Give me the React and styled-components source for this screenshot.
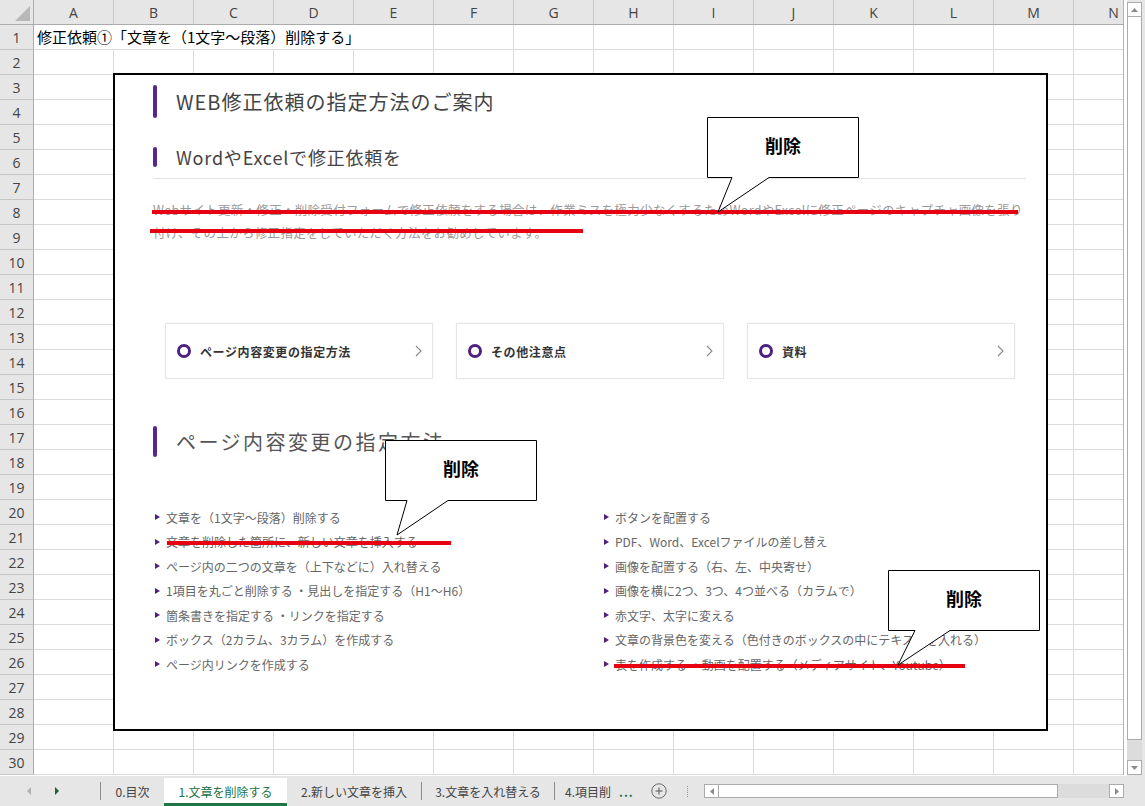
import React from "react";
import styled, { createGlobalStyle } from "styled-components";

const JP = `"Noto Sans CJK JP", "Noto Sans", sans-serif`;

const GlobalStyle = createGlobalStyle`
  html, body { margin: 0; padding: 0; }
  body { font-family: ${JP}; background: #e6e6e6; overflow: hidden; }
  *, *::before, *::after { box-sizing: border-box; }
`;

const Window = styled.div`
  width: 1145px;
  height: 806px;
  display: flex;
  flex-direction: column;
  background: #e6e6e6;
  overflow: hidden;
`;

const Workspace = styled.div`
  display: flex;
  height: 776px;
  flex: none;
`;

const Sheet = styled.div`
  position: relative;
  width: 1127px;
  height: 776px;
  flex: none;
  background: #fff;
  padding-right: 3px;
  overflow: hidden;
`;

const GridClip = styled.div`
  width: 1124px;
  height: 775px;
  overflow: hidden;
  border-right: 1px solid #b4b4b4;
`;

const Grid = styled.div`
  display: grid;
  grid-template-columns: 34px repeat(14, 80px);
  grid-auto-rows: 25px;
  width: 1154px;
`;

const Corner = styled.div`
  position: relative;
  background: #e6e6e6;
  border-right: 1px solid #ababab;
  border-bottom: 1px solid #ababab;
  &::after {
    content: "";
    position: absolute;
    right: 3px;
    bottom: 3px;
    width: 0;
    height: 0;
    border-left: 15px solid transparent;
    border-bottom: 15px solid #b8b8b8;
  }
`;

const ColHead = styled.div`
  background: #e6e6e6;
  border-right: 1px solid #c6c6c6;
  border-bottom: 1px solid #ababab;
  display: flex;
  align-items: center;
  justify-content: center;
  font-family: "Open Sans", "Noto Sans", sans-serif;
  font-size: 14px;
  color: #444;
`;

const RowHead = styled.div`
  background: #e6e6e6;
  border-right: 1px solid #ababab;
  border-bottom: 1px solid #c6c6c6;
  display: flex;
  align-items: center;
  justify-content: center;
  font-family: "Open Sans", "Noto Sans", sans-serif;
  font-size: 14px;
  color: #444;
`;

const Cell = styled.div`
  border-right: 1px solid ${(p) => (p.$flow ? "transparent" : "#dadada")};
  border-bottom: 1px solid #dadada;
  padding-left: 3px;
  font-family: ${JP};
  font-size: 15px;
  line-height: 24px;
  color: #000;
  white-space: nowrap;
`;

/* ---------- embedded picture of the web page ---------- */

const Page = styled.div`
  position: absolute;
  left: 113px;
  top: 73px;
  width: 935px;
  height: 658px;
  border: 2px solid #000;
  background: #fff;
  padding: 10px 20px 0 38px;
  overflow: hidden;
  font-family: ${JP};
`;

const Heading = styled.div`
  display: flex;
  align-items: center;
  gap: 19px;
  height: ${(p) => p.$h}px;
  margin-top: ${(p) => p.$mt || 0}px;
  font-size: ${(p) => p.$fs}px;
  letter-spacing: ${(p) => p.$ls}px;
  color: ${(p) => p.$color || "#444"};
  line-height: 1;
  white-space: nowrap;
`;

const Bar = styled.span`
  width: 4px;
  height: 100%;
  border-radius: 2px;
  background: #55298a;
  flex: none;
`;

const Rule = styled.div`
  height: 1px;
  background: #e3e3e3;
  margin-top: 11px;
`;

const Lead = styled.p`
  margin: 20px 0 0;
  font-size: 12.5px;
  line-height: 22.5px;
  letter-spacing: 0.3px;
  color: #9a9a9a;
  white-space: nowrap;
`;

const CardRow = styled.div`
  display: grid;
  grid-template-columns: repeat(3, 268px);
  gap: 23px;
  margin-top: 79px;
  padding-left: 12px;
`;

const Card = styled.div`
  height: 56px;
  border: 1px solid #e6e6e6;
  box-shadow: 0 0 2px rgba(0, 0, 0, 0.06);
  display: flex;
  align-items: center;
  gap: 9px;
  padding: 0 10px 0 11px;
`;

const Ring = styled.span`
  width: 14px;
  height: 14px;
  border-radius: 50%;
  border: 3px solid #4e2180;
  flex: none;
`;

const CardLabel = styled.span`
  flex: 1;
  font-size: 12px;
  font-weight: 700;
  color: #333;
  letter-spacing: 0.6px;
  white-space: nowrap;
`;

const List = styled.ul`
  list-style: none;
  margin: 48px 0 0;
  padding: 0 0 0 2px;
  display: grid;
  grid-template-columns: 449px 1fr;
  grid-template-rows: repeat(7, 24.5px);
  grid-auto-flow: column;
`;

const Item = styled.li`
  display: flex;
  align-items: center;
  gap: 6px;
  font-size: 12px;
  color: #666;
  white-space: nowrap;
`;

const Tri = styled.span`
  width: 0;
  height: 0;
  border-left: 5px solid #4e2180;
  border-top: 3px solid transparent;
  border-bottom: 3px solid transparent;
  flex: none;
`;

/* ---------- annotations over the picture ---------- */

const Strike = styled.div`
  position: absolute;
  height: 4px;
  background: #e60012;
`;

const CalloutWrap = styled.div`
  position: absolute;
  width: 153px;
  height: 98px;
`;

const CalloutShape = styled.svg`
  position: absolute;
  left: 0;
  top: 0;
  overflow: visible;
`;

const CalloutLabel = styled.div`
  position: relative;
  width: 152px;
  height: 60px;
  display: flex;
  justify-content: center;
  padding-top: 15px;
  font-family: ${JP};
  font-size: 18px;
  font-weight: 700;
  color: #000;
  line-height: 26px;
`;

function Callout({ left, top, b1, b2, tip }) {
  const pts = [
    [0.5, 0.5],
    [151.5, 0.5],
    [151.5, 60.5],
    [b2, 60.5],
    tip,
    [b1, 60.5],
    [0.5, 60.5],
  ]
    .map((p) => p.join(","))
    .join(" ");
  return (
    <CalloutWrap style={{ left, top }}>
      <CalloutShape width="153" height="98">
        <polygon points={pts} fill="#fff" stroke="#000" strokeWidth="1" />
      </CalloutShape>
      <CalloutLabel>削除</CalloutLabel>
    </CalloutWrap>
  );
}

/* ---------- scrollbars & tabs ---------- */

const VScroll = styled.div`
  width: 18px;
  flex: none;
  display: flex;
  flex-direction: column;
  padding: 2px 3px 1px 0;
  background: #e6e6e6;
`;

const SBtn = styled.div`
  flex: none;
  width: ${(p) => (p.$h ? "15px" : "100%")};
  height: ${(p) => (p.$h ? "100%" : "15px")};
  background: #fff;
  border: 1px solid #ababab;
  display: flex;
  align-items: center;
  justify-content: center;
`;

const VThumb = styled.div`
  flex: none;
  height: 723px;
  background: #fff;
  border: 1px solid #ababab;
  border-top: none;
`;

const Track = styled.div`
  flex: 1;
  background: #dcdcdc;
`;

const TabBar = styled.div`
  flex: none;
  height: 30px;
  display: flex;
  align-items: center;
  background: #e6e6e6;
  font-family: ${JP};
  font-size: 12px;
  color: #444;
`;

const NavArrows = styled.div`
  width: 100px;
  height: 100%;
  display: flex;
  align-items: center;
  padding-left: 27px;
  gap: 24px;
  flex: none;
`;

const ArrowL = styled.span`
  width: 0;
  height: 0;
  border-top: 4px solid transparent;
  border-bottom: 4px solid transparent;
  border-right: 4px solid ${(p) => p.$c};
`;

const ArrowR = styled.span`
  width: 0;
  height: 0;
  border-top: 4px solid transparent;
  border-bottom: 4px solid transparent;
  border-left: 4px solid ${(p) => p.$c};
`;

const Sep = styled.span`
  width: 1px;
  height: 18px;
  background: #8c8c8c;
  flex: none;
`;

const Tab = styled.div`
  width: ${(p) => p.$w}px;
  flex: none;
  height: ${(p) => (p.$active ? "28px" : "100%")};
  align-self: flex-end;
  display: flex;
  align-items: center;
  justify-content: ${(p) => (p.$start ? "flex-start" : "center")};
  padding: ${(p) => (p.$start ? "0 0 0 10px" : "0")};
  padding-top: ${(p) => (p.$active ? "1px" : "0")};
  background: ${(p) => (p.$active ? "#fff" : "transparent")};
  color: ${(p) => (p.$active ? "#217346" : "#444")};
  border-bottom: ${(p) => (p.$active ? "3px solid #217346" : "none")};
  white-space: nowrap;
`;

const More = styled.span`
  margin-left: 8px;
  color: #217346;
  font-weight: 700;
  letter-spacing: 1px;
`;

const PlusBtn = styled.svg`
  flex: none;
  margin-left: 2px;
`;

const DotSep = styled.span`
  flex: none;
  margin-left: 20px;
  width: 1px;
  height: 11px;
  border-left: 1px dotted #9a9a9a;
`;

const HScroll = styled.div`
  flex: none;
  margin-left: 16px;
  width: 420px;
  height: 14px;
  display: flex;
  background: #dcdcdc;
`;

const HThumb = styled.div`
  flex: none;
  width: 339px;
  background: #fff;
  border: 1px solid #ababab;
  border-left: none;
`;

const Arrow = ({ dir }) => {
  const shapes = {
    up: "0,4 3.5,0 7,4",
    down: "0,0 3.5,4 7,0",
    left: "4,0 0,3.5 4,7",
    right: "0,0 4,3.5 0,7",
  };
  const vertical = dir === "up" || dir === "down";
  return (
    <svg width={vertical ? 7 : 4} height={vertical ? 4 : 7}>
      <polygon points={shapes[dir]} fill="#8a8a8a" />
    </svg>
  );
};

const Chevron = () => (
  <svg width="7" height="12" viewBox="0 0 7 12">
    <polyline points="1,1 6,6 1,11" fill="none" stroke="#8a8a8a" strokeWidth="1.1" />
  </svg>
);

const COLS = "ABCDEFGHIJKLMN".split("");
const ROWS = Array.from({ length: 30 }, (_, i) => i + 1);

const leftItems = [
  "文章を（1文字～段落）削除する",
  "文章を削除した箇所に、新しい文章を挿入する",
  "ページ内の二つの文章を（上下などに）入れ替える",
  "1項目を丸ごと削除する ・見出しを指定する（H1～H6）",
  "箇条書きを指定する ・リンクを指定する",
  "ボックス（2カラム、3カラム）を作成する",
  "ページ内リンクを作成する",
];

const rightItems = [
  "ボタンを配置する",
  "PDF、Word、Excelファイルの差し替え",
  "画像を配置する（右、左、中央寄せ）",
  "画像を横に2つ、3つ、4つ並べる（カラムで）",
  "赤文字、太字に変える",
  "文章の背景色を変える（色付きのボックスの中にテキストを入れる）",
  "表を作成する ・動画を配置する（メディアサイト、Youtube）",
];

const cards = ["ページ内容変更の指定方法", "その他注意点", "資料"];

export default function App() {
  return (
    <Window>
      <GlobalStyle />
      <Workspace>
        <Sheet>
          <GridClip>
            <Grid>
              <Corner />
              {COLS.map((c) => (
                <ColHead key={c}>{c}</ColHead>
              ))}
              {ROWS.map((r) => (
                <React.Fragment key={r}>
                  <RowHead>{r}</RowHead>
                  {COLS.map((c, ci) => (
                    <Cell key={c} $flow={r === 1 && ci < 4}>
                      {r === 1 && ci === 0 ? "修正依頼①「文章を（1文字～段落）削除する」" : null}
                    </Cell>
                  ))}
                </React.Fragment>
              ))}
            </Grid>
          </GridClip>

          <Page>
            <Heading $h={33} $fs={20} $ls={1}>
              <Bar />
              WEB修正依頼の指定方法のご案内
            </Heading>
            <Heading $h={20} $mt={29} $fs={18} $ls={0.8}>
              <Bar />
              WordやExcelで修正依頼を
            </Heading>
            <Rule />
            <Lead>
              Webサイト更新・修正・削除受付フォームで修正依頼をする場合は、作業ミスを極力少なくするためWordやExcelに修正ページのキャプチャ画像を張り
              <br />
              付け、その上から修正指定をしていただく方法をお勧めしています。
            </Lead>
            <CardRow>
              {cards.map((t) => (
                <Card key={t}>
                  <Ring />
                  <CardLabel>{t}</CardLabel>
                  <Chevron />
                </Card>
              ))}
            </CardRow>
            <Heading $h={31} $mt={47} $fs={20} $ls={2.5} $color="#555">
              <Bar />
              ページ内容変更の指定方法
            </Heading>
            <List>
              {leftItems.concat(rightItems).map((t) => (
                <Item key={t}>
                  <Tri />
                  {t}
                </Item>
              ))}
            </List>
          </Page>

          <Strike style={{ left: 152, top: 210, width: 866 }} />
          <Strike style={{ left: 150, top: 229, width: 433 }} />
          <Strike style={{ left: 167, top: 541, width: 284 }} />
          <Strike style={{ left: 614, top: 664, width: 351 }} />

          <Callout left={707} top={117} b1={25} b2={62} tip={[11, 95]} />
          <Callout left={385} top={440} b1={22} b2={63} tip={[12, 95]} />
          <Callout left={888} top={570} b1={27} b2={62} tip={[10, 95]} />
        </Sheet>

        <VScroll>
          <SBtn>
            <Arrow dir="up" />
          </SBtn>
          <VThumb />
          <Track />
          <SBtn>
            <Arrow dir="down" />
          </SBtn>
        </VScroll>
      </Workspace>

      <TabBar>
        <NavArrows>
          <ArrowL $c="#b0b0b0" />
          <ArrowR $c="#1e5e38" />
        </NavArrows>
        <Sep />
        <Tab $w={63}>0.目次</Tab>
        <Tab $w={123} $active>
          1.文章を削除する
        </Tab>
        <Tab $w={134}>2.新しい文章を挿入</Tab>
        <Sep />
        <Tab $w={132}>3.文章を入れ替える</Tab>
        <Sep />
        <Tab $w={94} $start>
          4.項目削<More>...</More>
        </Tab>
        <PlusBtn width="16" height="16" viewBox="0 0 16 16">
          <circle cx="8" cy="8" r="7.2" fill="none" stroke="#6a6a6a" strokeWidth="1" />
          <line x1="4.5" y1="8" x2="11.5" y2="8" stroke="#6a6a6a" strokeWidth="1.2" />
          <line x1="8" y1="4.5" x2="8" y2="11.5" stroke="#6a6a6a" strokeWidth="1.2" />
        </PlusBtn>
        <DotSep />
        <HScroll>
          <SBtn $h>
            <Arrow dir="left" />
          </SBtn>
          <HThumb />
          <Track />
          <SBtn $h>
            <Arrow dir="right" />
          </SBtn>
        </HScroll>
      </TabBar>
    </Window>
  );
}
